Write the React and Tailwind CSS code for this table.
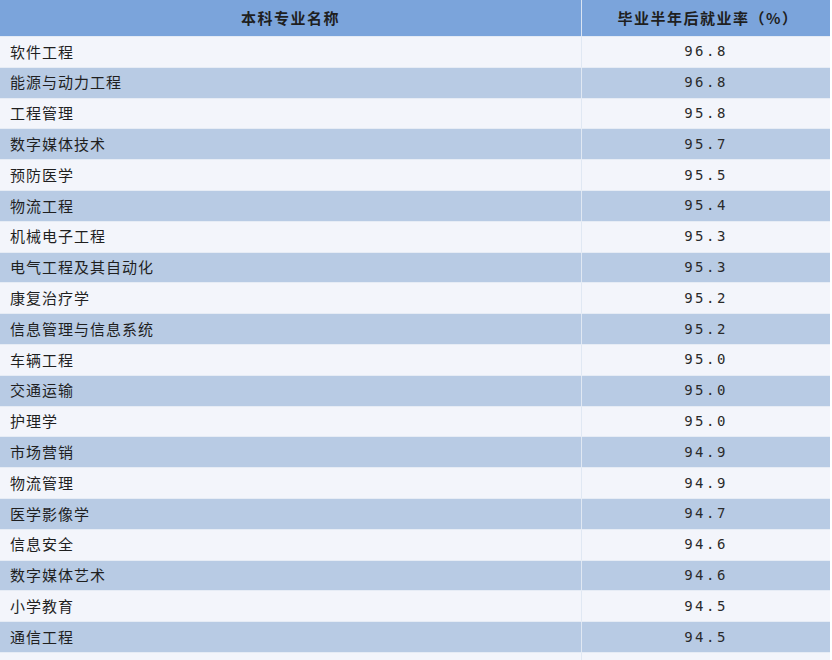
const rows = [
  ['软件工程', '96.8'],
  ['能源与动力工程', '96.8'],
  ['工程管理', '95.8'],
  ['数字媒体技术', '95.7'],
  ['预防医学', '95.5'],
  ['物流工程', '95.4'],
  ['机械电子工程', '95.3'],
  ['电气工程及其自动化', '95.3'],
  ['康复治疗学', '95.2'],
  ['信息管理与信息系统', '95.2'],
  ['车辆工程', '95.0'],
  ['交通运输', '95.0'],
  ['护理学', '95.0'],
  ['市场营销', '94.9'],
  ['物流管理', '94.9'],
  ['医学影像学', '94.7'],
  ['信息安全', '94.6'],
  ['数字媒体艺术', '94.6'],
  ['小学教育', '94.5'],
  ['通信工程', '94.5'],
]

export default function App() {
  return (
    <div
      className="w-[832px] h-[660px] overflow-hidden bg-white text-[#1f1f1f]"
      style={{ fontFamily: '"Noto Sans CJK SC", "Noto Sans", sans-serif' }}
    >
      <div className="w-[830px] flex flex-col">
        {/* Header */}
        <div className="flex h-[37px] bg-[#7ba4db] border-b border-[#e4ebf5] font-bold text-[15px] tracking-[1.5px]">
          <div className="w-[582px] flex items-center justify-center border-r border-[#d9e4f3]">本科专业名称</div>
          <div className="flex-1 flex items-center justify-center pl-[4px]">毕业半年后就业率（%）</div>
        </div>

        {rows.map(([name, rate], i) => (
          <div
            key={name}
            className={`flex h-[30.8px] border-b border-[#e6ecf5] ${i % 2 === 0 ? 'bg-[#f3f5fb]' : 'bg-[#b8cbe4]'}`}
          >
            <div className="w-[582px] flex items-center pl-[10px] text-[15px] tracking-[1px] border-r border-[#e0e8f3]">
              {name}
            </div>
            <div
              className="flex-1 flex items-center justify-center text-[14px] tracking-[2.5px] text-[#2a2a2a]"
              style={{ fontFamily: '"DejaVu Sans Mono", monospace' }}
            >
              {rate}
            </div>
          </div>
        ))}

        <div className="flex h-[10px] bg-[#f3f5fb]">
          <div className="w-[582px] border-r border-[#e0e8f3]" />
        </div>
      </div>
    </div>
  )
}
